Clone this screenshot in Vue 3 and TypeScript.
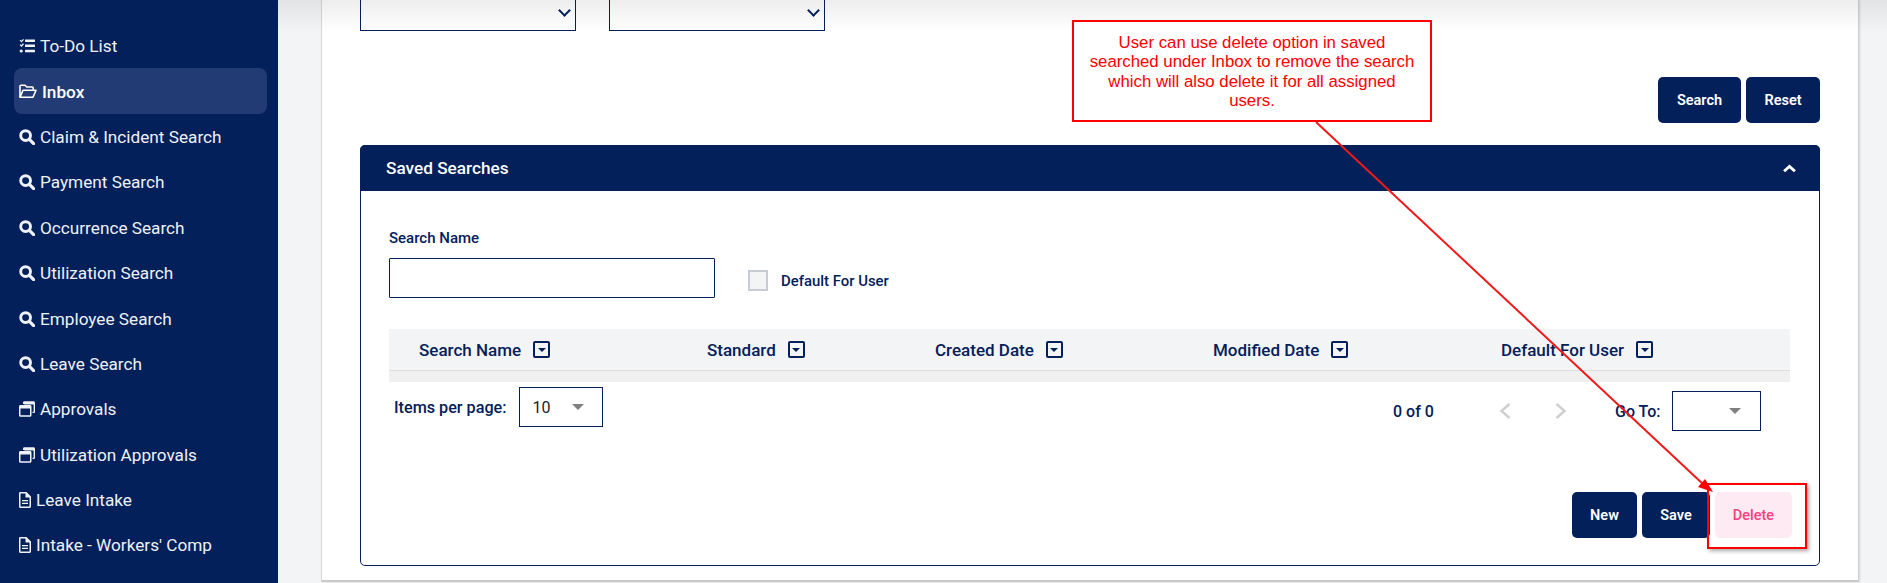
<script setup lang="ts">
type Nav = { label: string; icon: string; active?: boolean }
const nav: Nav[] = [
  { label: 'To-Do List', icon: 'tasks' },
  { label: 'Inbox', icon: 'folder', active: true },
  { label: 'Claim & Incident Search', icon: 'search' },
  { label: 'Payment Search', icon: 'search' },
  { label: 'Occurrence Search', icon: 'search' },
  { label: 'Utilization Search', icon: 'search' },
  { label: 'Employee Search', icon: 'search' },
  { label: 'Leave Search', icon: 'search' },
  { label: 'Approvals', icon: 'windows' },
  { label: 'Utilization Approvals', icon: 'windows' },
  { label: 'Leave Intake', icon: 'file' },
  { label: "Intake - Workers' Comp", icon: 'file' },
]
const cols = [
  { label: 'Search Name', w: 288 },
  { label: 'Standard', w: 228 },
  { label: 'Created Date', w: 278 },
  { label: 'Modified Date', w: 288 },
  { label: 'Default For User', w: 289 },
]
</script>

<template>
  <div class="page">
    <aside class="sidebar">
      <div v-for="n in nav" :key="n.label" class="nav-row" :class="{ active: n.active }">
        <svg v-if="n.icon === 'tasks'" class="ico" viewBox="0 0 16 16" fill="currentColor">
          <path d="M0.600 2.600 1.500 1.800 2.400 2.700 4 .9 5 1.800 2.500 4.600ZM0.600 7 1.500 6.200 2.400 7.100 4 5.300 5 6.200 2.500 9Z" />
          <circle cx="2.200" cy="13" r="1.600" />
          <rect x="6" y="1.400" width="10" height="2.500" rx=".4" />
          <rect x="6" y="6.400" width="10" height="2.500" rx=".4" />
          <rect x="6" y="11.800" width="10" height="2.500" rx=".4" />
        </svg>
        <svg v-else-if="n.icon === 'folder'" class="ico folder" viewBox="0 0 18 15" fill="none" stroke="currentColor" stroke-width="1.600" stroke-linejoin="round">
          <path d="M1 13V2.200C1 1.600 1.400 1.200 2 1.200H6L7.800 3H13.200C13.800 3 14.200 3.400 14.200 4V5.800" />
          <path d="M1 13.300 4 6.300H17L14 13.300Z" />
        </svg>
        <svg v-else-if="n.icon === 'search'" class="ico" viewBox="0 0 16 16" fill="none" stroke="currentColor">
          <circle cx="6.600" cy="6.600" r="4.900" stroke-width="2.900" />
          <path d="M10.400 10.400 14.600 14.600" stroke-width="3.200" stroke-linecap="round" />
        </svg>
        <svg v-else-if="n.icon === 'windows'" class="ico" viewBox="0 0 16 16" fill="currentColor">
          <path fill-rule="evenodd" d="M1.500 4H11c.8 0 1.500.7 1.500 1.500v8.800c0 .8-.7 1.500-1.500 1.500H1.500C.7 15.800 0 15.100 0 14.300V5.500C0 4.700.7 4 1.500 4ZM1.500 7.600V14.100C1.500 14.200 1.600 14.300 1.700 14.300H10.800C10.900 14.300 11 14.200 11 14.100V7.600Z" />
          <path d="M4 1.600C4 .9 4.600.3 5.300.3H14.500C15.300.3 16 1 16 1.800V10.800C16 11.500 15.400 12.100 14.700 12.100H13.500V10.700H14.400C14.500 10.700 14.600 10.600 14.600 10.500V3.500H5.300V3H4Z" />
        </svg>
        <svg v-else class="ico file" viewBox="0 0 12 16" fill="currentColor">
          <path fill-rule="evenodd" d="M1.300 0H7.500L12 4.500V14.500C12 15.300 11.300 16 10.500 16H1.500C.7 16 0 15.300 0 14.500V1.300C0 .6.600 0 1.300 0ZM1.500 1.500V14.500H10.500V5.500H6.500V1.500ZM3 8H9V9.300H3ZM3 10.700H9V12H3Z" />
        </svg>
        <span>{{ n.label }}</span>
      </div>
    </aside>

    <main class="main">
      <div class="card">
        <div class="top-selects">
          <div class="top-select"><span class="chev"></span></div>
          <div class="top-select"><span class="chev"></span></div>
        </div>

        <div class="actions top-actions">
          <button class="btn search-btn">Search</button>
          <button class="btn reset-btn">Reset</button>
        </div>

        <section class="panel">
          <header class="panel-head">
            <span>Saved Searches</span>
            <svg class="collapse" viewBox="0 0 12 8" fill="none" stroke="#fff" stroke-width="2.600">
              <path d="M1 6.500 6 2 11 6.500" />
            </svg>
          </header>
          <div class="panel-body">
            <div class="form-row">
              <div class="field">
                <label>Search Name</label>
                <div class="text-input"></div>
              </div>
              <div class="check-field">
                <span class="check"></span>
                <span>Default For User</span>
              </div>
            </div>

            <div class="table-head">
              <div v-for="c in cols" :key="c.label" class="th" :style="{ width: c.w + 'px' }">
                <span>{{ c.label }}</span>
                <span class="sort"><i></i></span>
              </div>
            </div>
            <div class="table-empty"></div>

            <div class="pager">
              <div class="per-page">
                <span>Items per page:</span>
                <div class="mat-select count"><span>10</span><i class="tri"></i></div>
              </div>
              <div class="pager-right">
                <span class="range">0 of 0</span>
                <svg class="pg pg-prev" viewBox="0 0 12 18" fill="none" stroke="#cfcfcf" stroke-width="2.500"><path d="M10.500 2 2.500 9 10.500 16" /></svg>
                <svg class="pg pg-next" viewBox="0 0 12 18" fill="none" stroke="#cfcfcf" stroke-width="2.500"><path d="M1.500 2 9.500 9 1.500 16" /></svg>
                <span class="goto">Go To:</span>
                <div class="mat-select go"><i class="tri"></i></div>
              </div>
            </div>

            <div class="actions bottom-actions">
              <button class="btn new-btn">New</button>
              <button class="btn save-btn">Save</button>
              <button class="btn delete-btn">Delete</button>
            </div>
          </div>
        </section>
      </div>
    </main>

    <div class="top-shade"></div>

    <div class="callout">User can use delete option in saved searched under Inbox to remove the search which will also delete it for all assigned users.</div>
    <div class="red-box"></div>
    <svg class="arrow" width="1887" height="583" viewBox="0 0 1887 583">
      <path d="M1316 122 1704 485" stroke="#f01a1a" stroke-width="2" fill="none" />
      <path d="M1713 492 1698 487 1705 479Z" fill="#f00" />
    </svg>
  </div>
</template>

<style>
html, body { margin: 0; padding: 0; background: #f3f4f6; }
</style>

<style scoped>
.page {
  position: relative;
  display: flex;
  width: 1887px;
  height: 583px;
  overflow: hidden;
  background: #f3f4f6;
  font-family: Roboto, "Liberation Sans", sans-serif;
  color: #04205a;
}
.sidebar {
  width: 278px;
  flex: none;
  box-sizing: border-box;
  padding: 23px 11px 0 14px;
  background: #03205a;
  color: #eef1f6;
  font-size: 17.200px;
}
.nav-row {
  display: flex;
  align-items: center;
  box-sizing: border-box;
  height: 45.400px;
  padding: 1px 0 0 5px;
  gap: 5px;
  border-radius: 8px;
}
.nav-row.active {
  background: #233b74;
  color: #fff;
  font-weight: 500;
}
.ico { width: 16px; height: 16px; flex: none; }
.ico.folder { width: 18px; height: 15px; }
.ico.file { width: 12px; height: 16px; }
.main {
  flex: 1;
  min-width: 0;
  box-sizing: border-box;
  padding: 0 28px 1px 43px;
}
.card {
  box-sizing: border-box;
  height: 582px;
  padding: 0 38px;
  background: #fff;
  border-right: 1px solid #cfcfcf;
  border-left: 1px solid #d8d8d8;
  border-bottom: 2px solid #c9c9c9;
  box-shadow: 1px 0 2px rgba(0, 0, 0, .12);
}
.top-selects { display: flex; gap: 33px; }
.top-select {
  position: relative;
  box-sizing: border-box;
  width: 216px;
  height: 31px;
  border: 1px solid #04205a;
  border-top: 0;
}
.chev {
  position: absolute;
  right: 6px;
  top: 6px;
  width: 7px;
  height: 7px;
  border-right: 2px solid #04205a;
  border-bottom: 2px solid #04205a;
  transform: rotate(45deg);
}
.actions { display: flex; justify-content: flex-end; gap: 5px; }
.top-actions { margin-top: 46px; }
.btn {
  height: 46px;
  box-sizing: border-box;
  padding: 0;
  border: 0;
  border-radius: 5px;
  background: #03205a;
  color: #fff;
  font: 600 14.500px Roboto, "Liberation Sans", sans-serif;
}
.search-btn { width: 83px; }
.reset-btn { width: 74px; }
.panel {
  box-sizing: border-box;
  height: 421px;
  margin-top: 22px;
  border: 1px solid #04205a;
  border-radius: 5px;
}
.panel-head {
  display: flex;
  align-items: center;
  justify-content: space-between;
  height: 46px;
  margin: -1px -1px 0;
  padding: 0 24px 0 26px;
  background: #03205a;
  border-radius: 5px 5px 0 0;
  color: #fff;
  font-size: 17.200px;
  font-weight: 500;
}
.collapse { width: 13px; height: 9px; }
.panel-body { padding: 0 29px 0 28px; }
.form-row { display: flex; align-items: flex-end; padding-top: 39px; }
.field label {
  display: block;
  margin-bottom: 11px;
  font-size: 15px;
  line-height: 17px;
  font-weight: 500;
}
.text-input {
  box-sizing: border-box;
  width: 326px;
  height: 40px;
  border: 1px solid #04205a;
  border-radius: 1px;
}
.check-field {
  display: flex;
  align-items: center;
  gap: 13px;
  margin: 0 0 7px 33px;
  font-size: 14.900px;
  font-weight: 500;
}
.check {
  box-sizing: border-box;
  width: 20px;
  height: 21px;
  border: 2px solid #c6ccd6;
  background: #f3f4f6;
}
.table-head {
  display: flex;
  box-sizing: border-box;
  height: 42px;
  margin-top: 31px;
  padding-left: 30px;
  background: #f3f4f6;
  border-bottom: 1px solid #dfdfdf;
}
.th {
  display: flex;
  align-items: center;
  flex: none;
  gap: 12px;
  font-size: 17px;
  font-weight: 500;
}
.sort {
  display: flex;
  align-items: center;
  justify-content: center;
  box-sizing: border-box;
  width: 17px;
  height: 17px;
  border: 2px solid #04205a;
  border-radius: 2px;
}
.sort i {
  width: 0;
  height: 0;
  border: 4px solid transparent;
  border-top: 4px solid #04205a;
  border-bottom: 0;
}
.table-empty { height: 11px; background: #f0f0f0; }
.pager {
  display: flex;
  justify-content: space-between;
  box-sizing: border-box;
  height: 55px;
  padding: 5px 0 0 5px;
  font-weight: 500;
  font-size: 16px;
}
.per-page { display: flex; align-items: center; gap: 12px; height: 40px; font-size: 16.200px; }
.mat-select {
  display: flex;
  align-items: center;
  box-sizing: border-box;
  height: 40px;
  border: 1px solid #04205a;
  font-weight: 400;
  font-size: 16px;
  color: #222;
}
.count { width: 84px; padding-left: 13px; gap: 21px; }
.tri {
  width: 0;
  height: 0;
  border: 6px solid transparent;
  border-top: 6px solid #808080;
  border-bottom: 0;
}
.pager-right { position: relative; display: flex; align-items: center; height: 40px; margin-top: 4px; }
.range { width: 106px; }
.pg { width: 12px; height: 18px; flex: none; }
.pg-next { margin-left: 44px; }
.goto { margin-left: 48px; width: 57px; }
.go { width: 89px; justify-content: flex-end; padding-right: 19px; margin-right: 29px; }
.bottom-actions { margin: 55px 0 0; gap: 5px; }
.new-btn { width: 65px; }
.save-btn { width: 68px; }
.delete-btn {
  width: 77px;
  margin-right: -2px;
  background: #feeaf2;
  color: #f5417f;
  font-weight: 500;
}
.top-shade {
  position: absolute;
  top: 0;
  left: 278px;
  right: 0;
  height: 32px;
  background: linear-gradient(rgba(0, 0, 0, .07), rgba(0, 0, 0, 0));
  pointer-events: none;
}
.callout {
  position: absolute;
  left: 1072px;
  top: 20px;
  box-sizing: border-box;
  width: 360px;
  height: 102px;
  padding: 11px 13px 0;
  background: #fff;
  border: 2px solid #f00;
  color: #f00;
  font: 16.800px/19.400px "Liberation Sans", Arial, sans-serif;
  text-align: center;
}
.red-box {
  position: absolute;
  left: 1707px;
  top: 483px;
  box-sizing: border-box;
  width: 100px;
  height: 66px;
  border: 2px solid #f00;
  box-shadow: 2px 2px 4px rgba(0, 0, 0, .35);
}
.arrow { position: absolute; left: 0; top: 0; pointer-events: none; }
</style>
